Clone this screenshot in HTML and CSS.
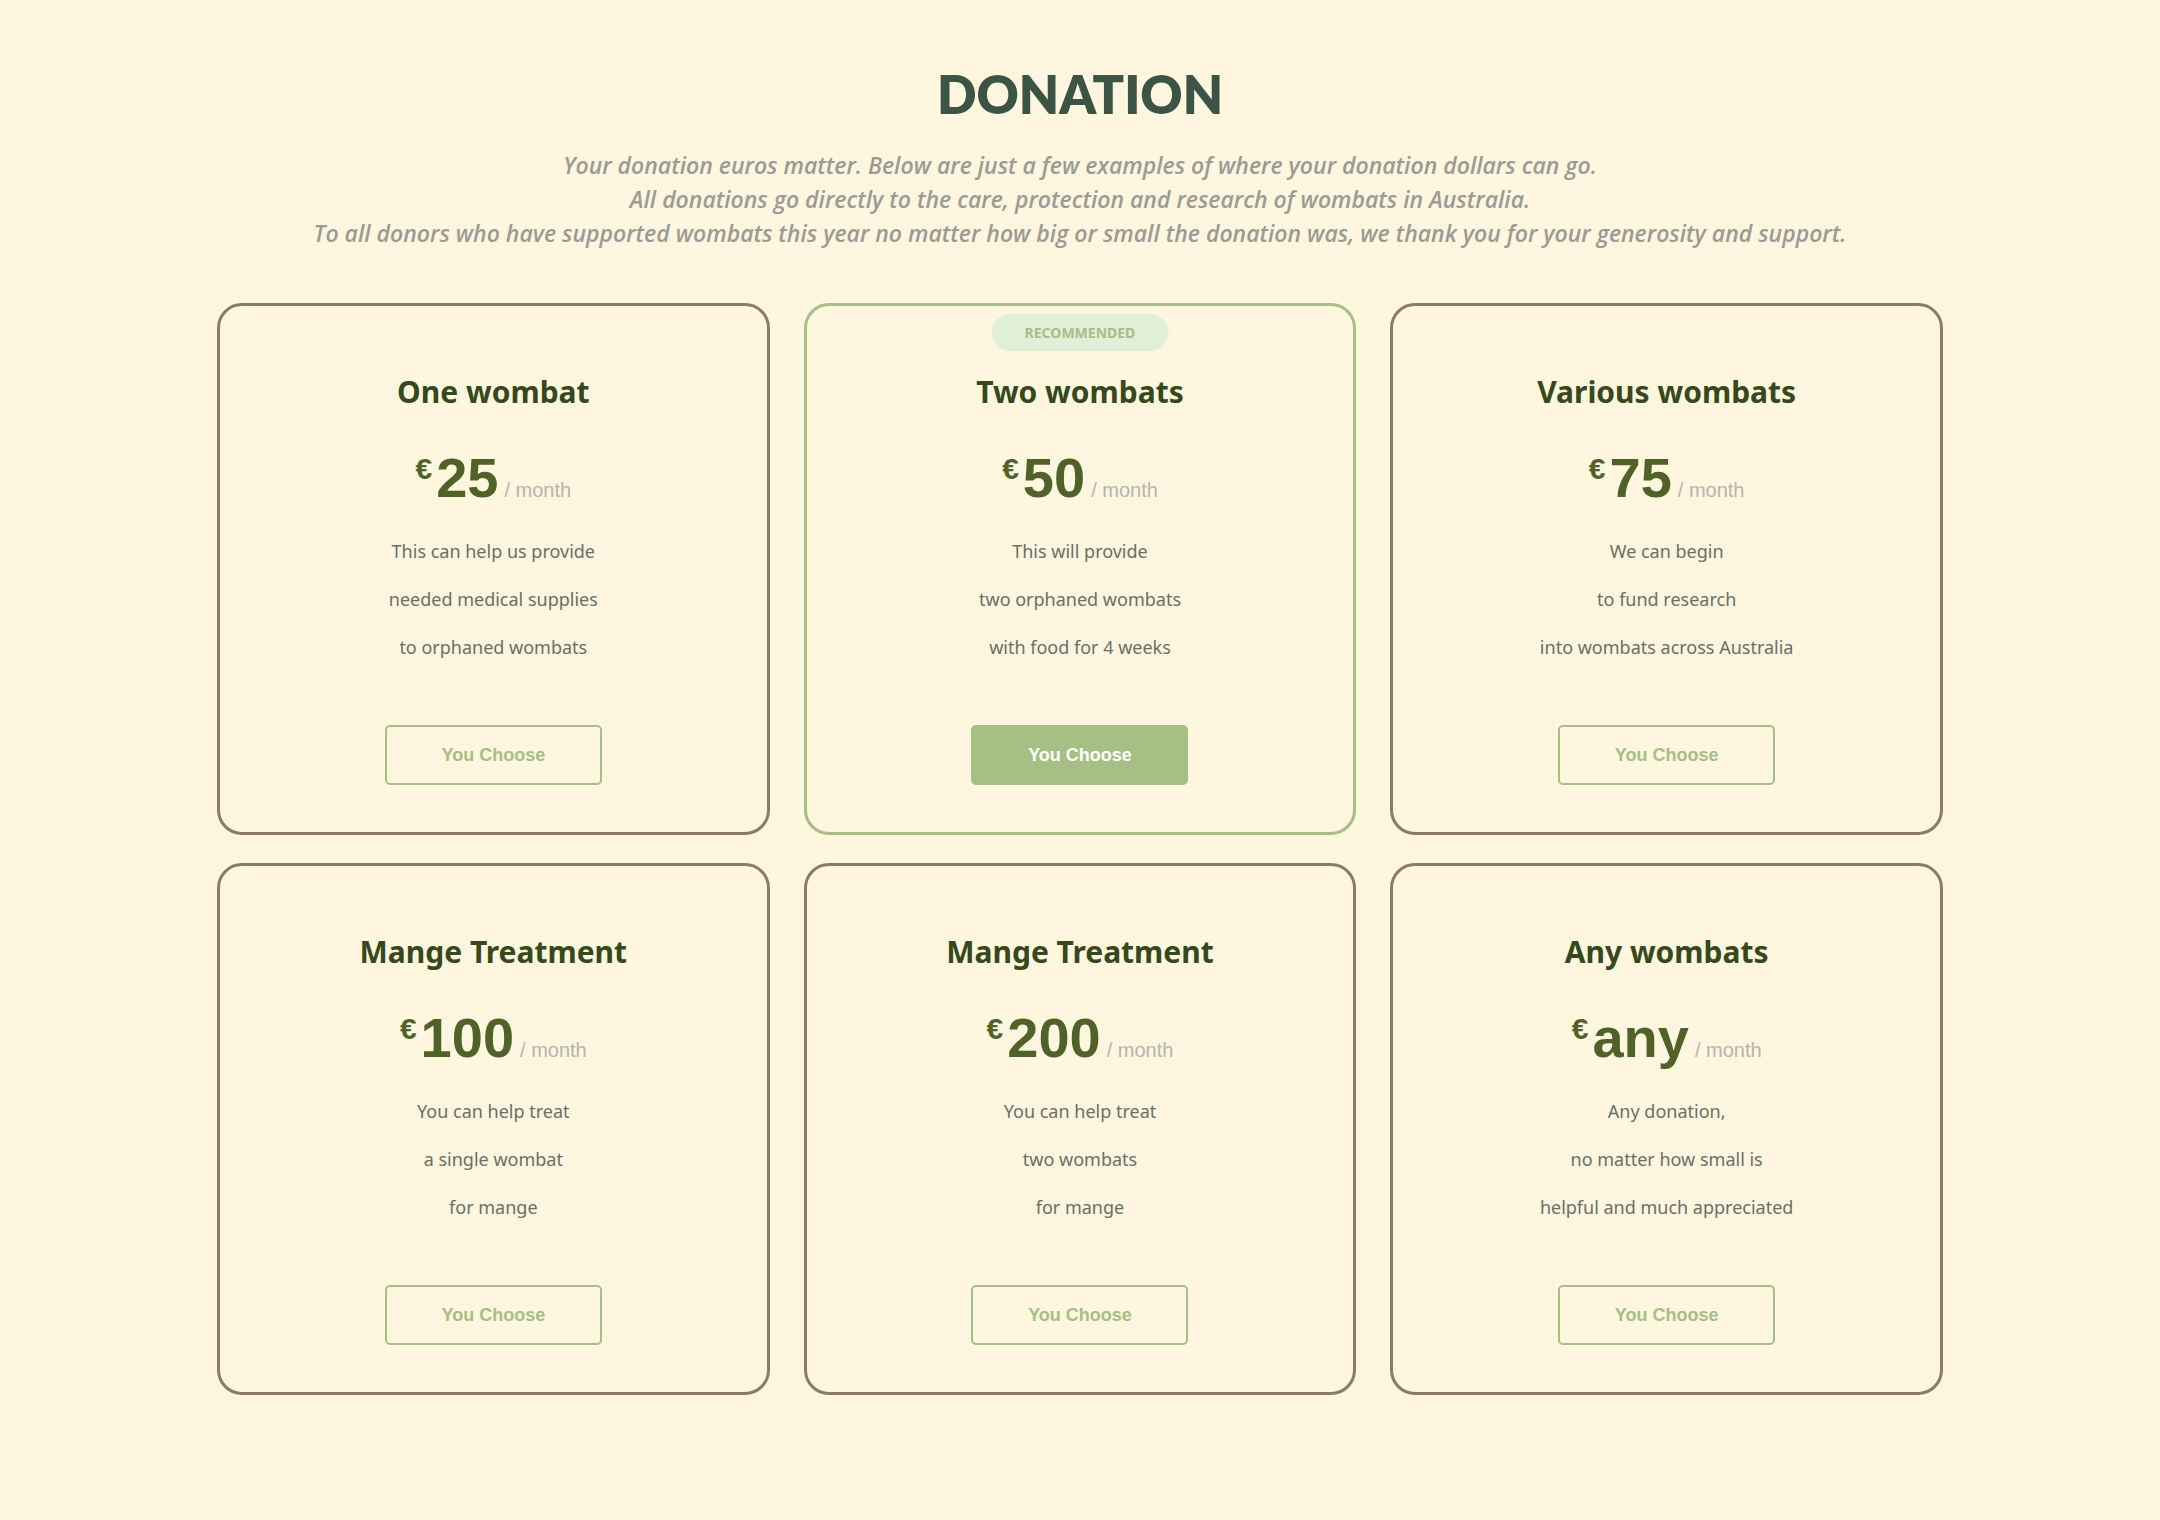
FILE: index.html
```html
<!DOCTYPE html>
<html lang="en">
<head>
<meta charset="utf-8">
<title>Donation</title>
<link rel="stylesheet" href="styles.css">
</head>
<body>
<main class="page">
  <header class="intro">
    <h1 class="heading">DONATION</h1>
    <p class="lead">Your donation euros matter. Below are just a few examples of where your donation dollars can go.<br>All donations go directly to the care, protection and research of wombats in Australia.<br>To all donors who have supported wombats this year no matter how big or small the donation was, we thank you for your generosity and support.</p>
  </header>
  <section class="grid">
    <article class="card">
      <h2 class="card-title">One wombat</h2>
      <div class="price"><span class="cur">€</span><span class="amount">25</span><span class="per">/ month</span></div>
      <p class="desc">This can help us provide<br>needed medical supplies<br>to orphaned wombats</p>
      <button class="btn">You Choose</button>
    </article>
    <article class="card card-featured">
      <span class="badge">RECOMMENDED</span>
      <h2 class="card-title">Two wombats</h2>
      <div class="price"><span class="cur">€</span><span class="amount">50</span><span class="per">/ month</span></div>
      <p class="desc">This will provide<br>two orphaned wombats<br>with food for 4 weeks</p>
      <button class="btn btn-solid">You Choose</button>
    </article>
    <article class="card">
      <h2 class="card-title">Various wombats</h2>
      <div class="price"><span class="cur">€</span><span class="amount">75</span><span class="per">/ month</span></div>
      <p class="desc">We can begin<br>to fund research<br>into wombats across Australia</p>
      <button class="btn">You Choose</button>
    </article>
    <article class="card">
      <h2 class="card-title">Mange Treatment</h2>
      <div class="price"><span class="cur">€</span><span class="amount">100</span><span class="per">/ month</span></div>
      <p class="desc">You can help treat<br>a single wombat<br>for mange</p>
      <button class="btn">You Choose</button>
    </article>
    <article class="card">
      <h2 class="card-title">Mange Treatment</h2>
      <div class="price"><span class="cur">€</span><span class="amount">200</span><span class="per">/ month</span></div>
      <p class="desc">You can help treat<br>two wombats<br>for mange</p>
      <button class="btn">You Choose</button>
    </article>
    <article class="card">
      <h2 class="card-title">Any wombats</h2>
      <div class="price"><span class="cur">€</span><span class="amount">any</span><span class="per">/ month</span></div>
      <p class="desc">Any donation,<br>no matter how small is<br>helpful and much appreciated</p>
      <button class="btn">You Choose</button>
    </article>
  </section>
</main>
</body>
</html>
```
FILE: styles.css
```css
* { box-sizing: border-box; }
html, body { margin: 0; padding: 0; }
body {
  background: #fef6de;
  font-family: "Noto Sans", sans-serif;
  min-height: 1520px;
}
.page {
  padding-top: 62px;
}
.intro {
  text-align: center;
}
.heading {
  margin: 0;
  font-family: Lato, sans-serif;
  font-weight: 800;
  font-size: 52px;
  line-height: 64px;
  color: #3b5446;
}
.lead {
  margin: 22px 0 0;
  font-family: "Open Sans", sans-serif;
  font-style: italic;
  font-weight: 600;
  font-size: 23px;
  line-height: 34px;
  color: #9b9b95;
}
.grid {
  width: 1726px;
  margin: 53px auto 0;
  display: grid;
  grid-template-columns: repeat(3, 1fr);
  column-gap: 34px;
  row-gap: 28px;
}
.card {
  position: relative;
  border: 3px solid #8c7c66;
  border-radius: 25px;
  padding: 66px 20px 47px;
  display: flex;
  flex-direction: column;
  align-items: center;
  text-align: center;
}
.card-featured {
  border-color: #a6bf84;
}
.badge {
  position: absolute;
  top: 8px;
  left: 50%;
  transform: translateX(-50%);
  width: 177px;
  height: 37px;
  border-radius: 19px;
  background: #dff0d7;
  color: #a6bf84;
  font-family: "Noto Sans", sans-serif;
  font-weight: 700;
  font-size: 14px;
  line-height: 37px;
  text-align: center;
}
.card-title {
  margin: 0;
  font-family: "Noto Sans", sans-serif;
  font-weight: 700;
  font-size: 30px;
  line-height: 40px;
  color: #36491b;
}
.price {
  margin-top: 25px;
  font-family: "Liberation Sans", Arial, sans-serif;
  line-height: 64px;
  white-space: nowrap;
}
.cur {
  font-size: 30px;
  font-weight: 700;
  color: #506228;
  vertical-align: 18px;
  margin-right: 4px;
}
.amount {
  font-size: 56px;
  font-weight: 700;
  color: #506228;
}
.per {
  font-size: 20px;
  color: #b5b5b0;
  margin-left: 6px;
}
.desc {
  margin: 3px 0 0;
  font-family: "Noto Sans", sans-serif;
  font-size: 18px;
  line-height: 48px;
  color: #6a6f69;
}
.btn {
  margin-top: 54px;
  width: 217px;
  height: 60px;
  border: 2px solid #a6bf84;
  border-radius: 5px;
  background: transparent;
  color: #a6bf84;
  font-family: "Liberation Sans", Arial, sans-serif;
  font-weight: 700;
  font-size: 18px;
  cursor: pointer;
}
.btn-solid {
  background: #a6bf84;
  color: #ffffff;
}
```
